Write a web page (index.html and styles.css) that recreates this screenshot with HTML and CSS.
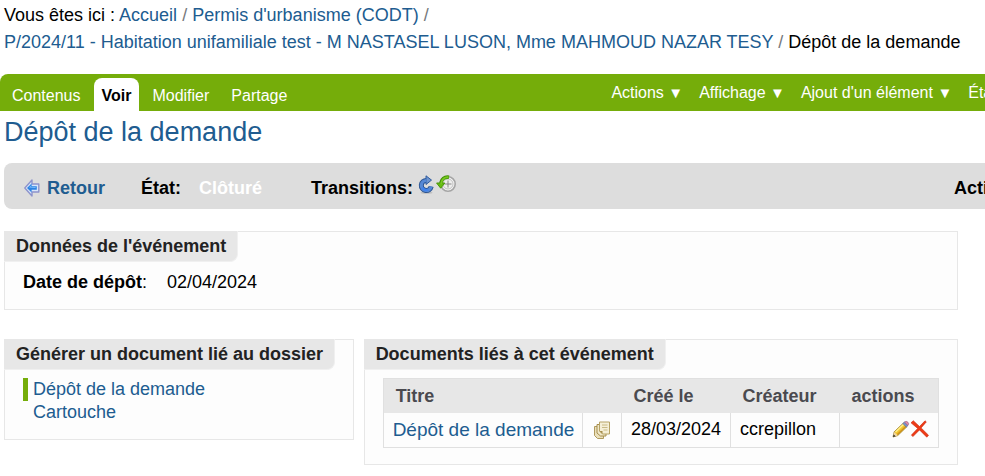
FILE: index.html
```html
<!DOCTYPE html>
<html lang="fr">
<head>
<meta charset="utf-8">
<title>Dépôt de la demande</title>
<link rel="stylesheet" href="styles.css">
</head>
<body>
<nav class="breadcrumbs" aria-label="Fil d'Ariane">
  <span>Vous êtes ici :</span>
  <a href="#">Accueil</a> <span class="sep">/</span>
  <a href="#">Permis d'urbanisme (CODT)</a> <span class="sep">/</span><br>
  <a href="#">P/2024/11 - Habitation unifamiliale test - M NASTASEL LUSON, Mme MAHMOUD NAZAR TESY</a> <span class="sep">/</span>
  <span>Dépôt de la demande</span>
</nav>

<div class="edit-bar">
  <nav class="views">
    <a href="#">Contenus</a>
    <a href="#" class="selected">Voir</a>
    <a href="#">Modifier</a>
    <a href="#">Partage</a>
  </nav>
  <div class="menus">
    <button type="button">Actions <span class="arrow">▼</span></button>
    <button type="button">Affichage <span class="arrow">▼</span></button>
    <button type="button">Ajout d'un élément <span class="arrow">▼</span></button>
    <button type="button">État <span class="arrow">▼</span></button>
  </div>
</div>

<main>
  <h1>Dépôt de la demande</h1>

  <div class="state-bar">
    <a href="#" class="back">
      <svg width="16" height="18" viewBox="0 0 16 18" aria-hidden="true">
        <path d="M.8 9 8 1v4h6.800v8H8v4z" fill="#d8e6fa" stroke="#8d93cc" stroke-width="1.400" stroke-linejoin="round"/>
        <path d="M3 9l4.600-4.600v2.900h5.200v3.400H7.600v2.900z" fill="#2d83e3"/>
        <path d="M5 8.600l2.200-2v1.500h4.400v.8z" fill="#79bbfa"/>
      </svg>
      Retour
    </a>
    <span class="state-label">État:</span>
    <span class="state-value">Clôturé</span>
    <span class="transitions-label">Transitions:</span>
    <span class="transitions">
      <button type="button" aria-label="Rouvrir">
        <svg width="17" height="19" viewBox="0 0 17 19" aria-hidden="true">
          <ellipse cx="8.500" cy="17.700" rx="6" ry="1" fill="#bcbcbc"/>
          <path d="M8.500 5.500A5 5 0 1 0 13.200 11.500" fill="none" stroke="#2c5593" stroke-width="5"/>
          <path d="M8 .8v8.700l5.500-4.400z" fill="#6d94cf" stroke="#315c9e"/>
          <path d="M8.500 5.500A5 5 0 1 0 13.200 11.500" fill="none" stroke="#5688d5" stroke-width="3.200"/>
          <path d="M4.200 12.500q1.800 3.600 6 2.400" fill="none" stroke="#3f82ef" stroke-width="2"/>
        </svg>
      </button>
      <button type="button" aria-label="Historique">
        <svg width="20" height="19" viewBox="0 0 20 19" aria-hidden="true">
          <circle cx="12" cy="9" r="7.200" fill="#f4f4f4" stroke="#a5a5a5" stroke-width="1.600"/>
          <circle cx="12" cy="9" r="5" fill="#eee" stroke="#c2c2c2"/>
          <path d="M12 5.500v7M8.500 9h7" fill="none" stroke="#888"/>
          <path d="M13 2.300C8.500 1.500 5.500 4 4.800 8" fill="none" stroke="#438f08" stroke-width="3.600"/>
          <path d="M.6 8h8.200l-4.100 5.200z" fill="#66bd13" stroke="#4b960c"/>
          <path d="M12.500 2.300C8.500 1.700 5.700 4.500 5 9" fill="none" stroke="#77c91f" stroke-width="2"/>
        </svg>
      </button>
    </span>
    <span class="actions-label">Actions:</span>
  </div>

  <section class="panel event">
    <h2>Données de l'événement</h2>
    <dl>
      <dt><b>Date de dépôt</b>:</dt>
      <dd>02/04/2024</dd>
    </dl>
  </section>

  <div class="columns">
    <section class="panel">
      <h2>Générer un document lié au dossier</h2>
      <ul class="templates">
        <li class="current"><a href="#">Dépôt de la demande</a></li>
        <li><a href="#">Cartouche</a></li>
      </ul>
    </section>

    <section class="panel documents">
      <h2>Documents liés à cet événement</h2>
      <table>
        <colgroup><col><col class="c-copy"><col class="c-data"><col class="c-data"><col class="c-actions"></colgroup>
        <thead>
          <tr><th>Titre</th><th></th><th>Créé le</th><th>Créateur</th><th>actions</th></tr>
        </thead>
        <tbody>
          <tr>
            <td class="doc-title"><a href="#">Dépôt de la demande</a></td>
            <td class="copy">
              <svg width="18" height="18" viewBox="0 0 18 18" aria-hidden="true">
                <path d="M1.500 5.500h9v12h-6l-3-3z" fill="#e9dfbb" stroke="#b09a5c"/>
                <path d="M4 3.500h9v11.500H7.500L4 12z" fill="#f0e8c9" stroke="#a58d4c"/>
                <path d="M6.500 1h10v12H9.500l-3-3z" fill="#f5efd7" stroke="#b7a366"/>
                <path d="M6.500 10h3v3z" fill="#a58d4c"/>
                <path d="M9 4h5.500M9 6.500h5.500M10.500 9h4" stroke="#c9ba86"/>
              </svg>
            </td>
            <td>28/03/2024</td>
            <td>ccrepillon</td>
            <td class="row-actions">
              <button type="button" aria-label="Modifier">
                <svg width="18" height="18" viewBox="0 0 18 18" aria-hidden="true">
                  <path d="M1 17l1.200-5.200L11.500 3l3.600 3.500-9.300 9z" fill="#f3c52d" stroke="#937629" stroke-width=".8"/>
                  <path d="M3.500 12L12 4" stroke="#fff08a" stroke-width="1.500"/>
                  <path d="M5.300 14.500L14 6.200" stroke="#cf931d" stroke-width="1.200"/>
                  <path d="M1 17l1.200-5 3.600 3.500z" fill="#efd6a4"/>
                  <path d="M1 17l.6-2.600 2 1.900z" fill="#222"/>
                  <path d="M10.800 3.600l1.700-1.500 3.500 3.400-1.700 1.600z" fill="#7693cc" stroke="#5b6d9b" stroke-width=".6"/>
                  <path d="M12.500 2.100q1.700-1.500 3.300 0 1.700 1.700.2 3.400z" fill="#e68aa4" stroke="#915b80" stroke-width=".6"/>
                </svg>
              </button>
              <button type="button" aria-label="Supprimer">
                <svg width="19" height="18" viewBox="0 0 19 18" aria-hidden="true">
                  <path d="M1 2.800L3.300.7 9.500 6.500 15 .8l1.300 1.100-5.200 6 7.400 7.300-1.700 2L9.500 9.900l-6.600 6.700-1.500-1.500 6.300-6.700z" fill="#ee3b16" stroke="#c9280c" stroke-width=".6"/>
                </svg>
              </button>
            </td>
          </tr>
        </tbody>
      </table>
    </section>
  </div>
</main>
</body>
</html>
```

FILE: styles.css
```css
* {
  box-sizing: border-box;
}

body {
  margin: 0;
  overflow-x: clip;
  background: #fff;
  color: #000;
  font: 18px/23px "Liberation Sans", Arial, sans-serif;
}

html {
  overflow-x: clip;
}

a {
  color: #205c90;
  text-decoration: none;
}

button {
  padding: 0;
  border: 0;
  background: none;
  color: inherit;
  font: inherit;
  cursor: pointer;
}

svg {
  display: block;
}

.breadcrumbs {
  padding: 2px 4px 18px;
  line-height: 27px;
}

.sep {
  color: #76797c;
}

.edit-bar {
  display: flex;
  justify-content: space-between;
  margin-right: -31px;
  height: 37px;
  padding-top: 4px;
  border-radius: 8px 0 0 0;
  background: #75ad0a;
  color: #fff;
  font-size: 16px;
  white-space: nowrap;
}

.views {
  display: flex;
  gap: 4px;
  padding-left: 3px;
}

.views a {
  padding: 6px 9px 4px;
  color: #fff;
}

.views .selected {
  padding: 6px 8px 4px;
  border-radius: 8px 8px 0 0;
  background: #fff;
  color: #000;
  font-weight: bold;
}

.menus {
  display: flex;
  align-items: flex-start;
  gap: 16px;
  padding-top: 3px;
}

.menus button {
  line-height: 23px;
}

.arrow {
  font-size: 15px;
}

main {
  padding: 0 27px 11px 4px;
}

h1 {
  margin: 0;
  padding-top: 5px;
  color: #205c90;
  font-size: 27px;
  font-weight: normal;
  line-height: 32px;
}

.state-bar {
  display: flex;
  align-items: center;
  height: 46px;
  margin: 15px -84px 22px 0;
  padding: 4px 16px 0 20px;
  border-radius: 8px;
  background: #ddd;
  font-weight: bold;
  white-space: nowrap;
}

.back {
  display: flex;
  align-items: center;
  gap: 7px;
}

.state-label {
  margin-left: 36px;
}

.state-value {
  margin-left: 18px;
  color: #fff;
}

.transitions-label {
  margin-left: 49px;
}

.transitions {
  display: flex;
  gap: 1px;
  margin-left: 5px;
  padding-bottom: 8px;
}

.actions-label {
  margin-left: auto;
}

.panel {
  border: 1px solid #e7e7e7;
  background: #fdfdfd;
}

.panel h2 {
  width: fit-content;
  margin: -1px 0 0 -1px;
  padding: 4px 11px 3px 12px;
  border-right: 1px solid #f0f0f0;
  border-bottom: 1px solid #f0f0f0;
  border-radius: 0 0 8px 0;
  background: #e7e7e7;
  color: #222;
  font-size: 18px;
  line-height: 23px;
}

.event {
  margin-bottom: 29px;
  padding-bottom: 15px;
}

dl {
  display: flex;
  gap: 20px;
  margin: 9px 18px 0;
}

dd {
  margin: 0;
}

.columns {
  display: grid;
  grid-template-columns: 10fr 17fr;
  align-items: start;
  gap: 10px;
}

.templates {
  margin: 8px 18px 15px;
  padding: 0;
  list-style: none;
}

.templates li {
  padding-left: 5px;
  border-left: 5px solid transparent;
}

.templates .current {
  border-color: #75ad0a;
}

table {
  width: calc(100% - 36px);
  margin: 8px 18px 16px;
  border-collapse: collapse;
  table-layout: fixed;
  border: 1px solid #e0e0e0;
}

.c-copy {
  width: 39px;
}

.c-data {
  width: 109px;
}

.c-actions {
  width: 99px;
}

th {
  height: 34px;
  padding: 2px 12px 0;
  background: #e7e7e7;
  color: #4a4a4f;
  text-align: left;
}

td {
  height: 35px;
  padding: 0 9px;
  border-right: 1px solid #e0e0e0;
  white-space: nowrap;
}

.doc-title {
  font-size: 19px;
}

td.copy {
  padding: 0 10px;
}

.row-actions {
  text-align: right;
  font-size: 0;
}

.row-actions button {
  vertical-align: middle;
}
```
